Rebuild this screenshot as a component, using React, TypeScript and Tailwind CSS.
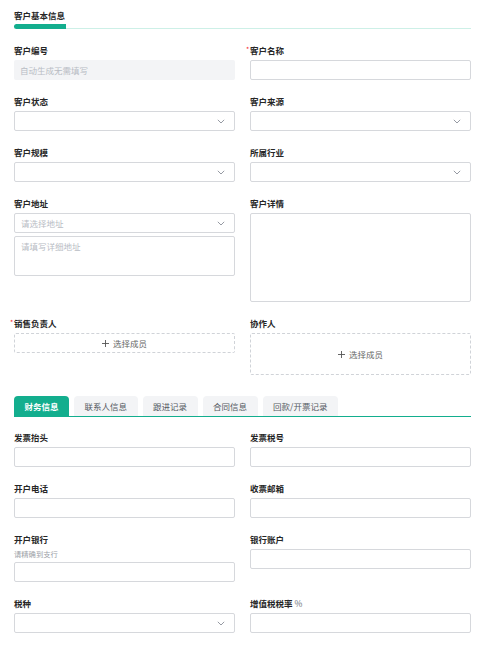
import React from "react";

const FONT = '"Noto Sans CJK SC", "Noto Sans", sans-serif';

function Chevron() {
  return (
    <svg width="8" height="5" viewBox="0 0 8 5" className="shrink-0">
      <polyline points="0.8,0.8 4,4 7.2,0.8" fill="none" stroke="#8a8f99" strokeWidth="0.9" />
    </svg>
  );
}

function Plus() {
  return (
    <svg width="7" height="7" viewBox="0 0 7 7" className="shrink-0">
      <line x1="3.5" y1="0" x2="3.5" y2="7" stroke="#555" strokeWidth="0.9" />
      <line x1="0" y1="3.5" x2="7" y2="3.5" stroke="#555" strokeWidth="0.9" />
    </svg>
  );
}

function Label({ text, required, extra }: { text: string; required?: boolean; extra?: string }) {
  return (
    <div className="relative h-[12px] mb-[4px] text-[8.5px] leading-[12px] font-semibold text-[#262626]">
      {required && (
        <span className="absolute left-[-4px] top-[-1px] text-[7px] text-[#f5222d] font-normal">*</span>
      )}
      {text}
      {extra && <span className="font-normal text-[#6b6f76]">{extra}</span>}
    </div>
  );
}

function Input({ disabled, placeholder }: { disabled?: boolean; placeholder?: string }) {
  return (
    <div
      className={
        disabled
          ? "h-[20px] rounded-[2px] bg-[#f3f4f6] flex items-center px-[6px] text-[8.5px] text-[#b8bcc4]"
          : "h-[20px] rounded-[2px] border border-[#d6d8dc] bg-white flex items-center px-[6px] text-[8.5px] text-[#b8bcc4]"
      }
    >
      {placeholder}
    </div>
  );
}

function Select({ placeholder }: { placeholder?: string }) {
  return (
    <div className="h-[20px] rounded-[2px] border border-[#d6d8dc] bg-white flex items-center justify-between pl-[6px] pr-[9px] text-[8.5px] text-[#b8bcc4]">
      <span>{placeholder}</span>
      <Chevron />
    </div>
  );
}

function Textarea({ h, placeholder }: { h: string; placeholder?: string }) {
  return (
    <div className={`${h} rounded-[2px] border border-[#d6d8dc] bg-white px-[6px] pt-[3px] text-[8.5px] leading-[12px] text-[#b8bcc4]`}>
      {placeholder}
    </div>
  );
}

function Members({ h }: { h: string }) {
  return (
    <div className={`${h} rounded-[2px] border border-dashed border-[#d0d3d8] flex items-center justify-center gap-[4px] text-[8.5px] text-[#666]`}>
      <Plus />
      <span>选择成员</span>
    </div>
  );
}

function Row({ children, className = "mt-[15px]" }: { children: React.ReactNode; className?: string }) {
  return <div className={`grid grid-cols-2 gap-x-[15px] items-start ${className}`}>{children}</div>;
}

export default function App() {
  const tabs = ["财务信息", "联系人信息", "跟进记录", "合同信息", "回款/开票记录"];
  return (
    <div className="w-[483px] h-[657px] bg-white pl-[14px] pr-[12px] pt-[9px]" style={{ fontFamily: FONT }}>
      <div className="h-[12px] text-[8.5px] leading-[12px] font-semibold text-[#262626]">客户基本信息</div>
      <div className="mt-[3px] flex items-end">
        <div className="w-[52px] h-[5px] rounded-l-[3px] bg-[#13ae8e]" />
        <div className="flex-1 h-[1.5px] bg-[#cdf0e7]" />
      </div>

      <Row>
        <div>
          <Label text="客户编号" />
          <Input disabled placeholder="自动生成无需填写" />
        </div>
        <div>
          <Label text="客户名称" required />
          <Input />
        </div>
      </Row>
      <Row>
        <div>
          <Label text="客户状态" />
          <Select />
        </div>
        <div>
          <Label text="客户来源" />
          <Select />
        </div>
      </Row>
      <Row>
        <div>
          <Label text="客户规模" />
          <Select />
        </div>
        <div>
          <Label text="所属行业" />
          <Select />
        </div>
      </Row>
      <Row>
        <div>
          <Label text="客户地址" />
          <Select placeholder="请选择地址" />
          <div className="mt-[3px]">
            <Textarea h="h-[40px]" placeholder="请填写详细地址" />
          </div>
        </div>
        <div>
          <Label text="客户详情" />
          <Textarea h="h-[89px]" />
        </div>
      </Row>
      <Row>
        <div>
          <Label text="销售负责人" required />
          <Members h="h-[20px]" />
        </div>
        <div>
          <Label text="协作人" />
          <Members h="h-[42px]" />
        </div>
      </Row>

      <div className="mt-[21px] flex items-end gap-[5px] border-b border-[#13ae8e]">
        {tabs.map((t, i) => (
          <div
            key={t}
            className={
              i === 0
                ? "h-[20px] px-[10.5px] rounded-t-[4px] bg-[#13ae8e] text-white font-semibold text-[8.5px] flex items-center"
                : "h-[20px] px-[10.5px] rounded-t-[4px] bg-[#f3f4f6] text-[#555a62] text-[8.5px] flex items-center"
            }
          >
            {t}
          </div>
        ))}
      </div>

      <Row className="mt-[14px]">
        <div>
          <Label text="发票抬头" />
          <Input />
        </div>
        <div>
          <Label text="发票税号" />
          <Input />
        </div>
      </Row>
      <Row>
        <div>
          <Label text="开户电话" />
          <Input />
        </div>
        <div>
          <Label text="收票邮箱" />
          <Input />
        </div>
      </Row>
      <Row>
        <div>
          <Label text="开户银行" />
          <div className="h-[10px] mb-[3px] text-[7.3px] leading-[10px] text-[#9a9ea6]">请精确到支行</div>
          <Input />
        </div>
        <div>
          <Label text="银行账户" />
          <Input />
        </div>
      </Row>
      <Row>
        <div>
          <Label text="税种" />
          <Select />
        </div>
        <div>
          <Label text="增值税税率" extra=" %" />
          <Input />
        </div>
      </Row>
    </div>
  );
}
